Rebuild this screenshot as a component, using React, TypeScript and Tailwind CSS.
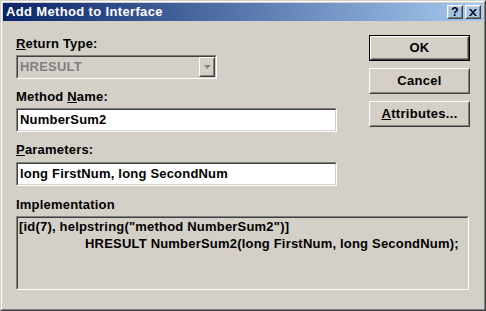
import React from "react";

const F = { fontFamily: '"Liberation Sans", Arial, sans-serif' };

function Sunken({ className = "", inner = "", children }: { className?: string; inner?: string; children?: React.ReactNode }) {
  return (
    <div className={`border border-t-[#808080] border-l-[#808080] border-b-white border-r-white ${className}`}>
      <div className={`h-full border border-t-[#404040] border-l-[#404040] border-b-[#d4d0c8] border-r-[#d4d0c8] ${inner}`}>{children}</div>
    </div>
  );
}

function Raised({ className = "", inner = "", children }: { className?: string; inner?: string; children?: React.ReactNode }) {
  return (
    <div className={`border border-t-white border-l-white border-b-[#404040] border-r-[#404040] ${className}`}>
      <div className={`h-full border border-t-[#d4d0c8] border-l-[#d4d0c8] border-b-[#808080] border-r-[#808080] ${inner}`}>{children}</div>
    </div>
  );
}

function Label({ children, className = "" }: { children: React.ReactNode; className?: string }) {
  return <div className={`h-[16px] leading-[16px] text-[13px] font-bold text-black tracking-[0.2px] ${className}`}>{children}</div>;
}

const btnText = "flex items-center justify-center text-[13px] font-bold text-black tracking-[0.3px]";

export default function App() {
  return (
    <div style={F} className="w-[486px] h-[311px] bg-[#d4d0c8]">
      <div className="w-full h-full border border-t-[#d4d0c8] border-l-[#d4d0c8] border-b-[#404040] border-r-[#404040]">
        <div className="w-full h-full border border-t-white border-l-white border-b-[#808080] border-r-[#808080] p-px flex flex-col">
          {/* Title bar */}
          <div className="h-[18px] flex items-center bg-[linear-gradient(to_right,#0a246a,#a6caf0)] pl-[3px] pr-[2px]">
            <div className="flex-1 text-white font-bold text-[13px] leading-[18px] tracking-[0.35px]">Add Method to Interface</div>
            <Raised className="w-[16px] h-[14px]" inner="flex items-center justify-center text-[12px] font-bold leading-none text-black">?</Raised>
            <Raised className="w-[16px] h-[14px] ml-[2px]" inner="flex items-center justify-center">
              <svg width="8" height="7" viewBox="0 0 8 7">
                <path d="M0 0h2l2 2.5L6 0h2L5 3.5 8 7H6L4 4.5 2 7H0l3-3.5z" fill="#000" />
              </svg>
            </Raised>
          </div>
          {/* Body */}
          <div className="flex-1 flex flex-col px-[13px] pt-[14px]">
            <div className="flex justify-between">
              <div className="flex flex-col pt-px">
                <Label><span className="underline">R</span>eturn Type:</Label>
                <Sunken className="mt-[3px] w-[201px] h-[24px]" inner="flex items-stretch">
                  <div className="flex-1 pl-[2px] text-[13px] font-bold text-[#808080] leading-[20px] tracking-[0.2px]">HRESULT</div>
                  <Raised className="w-[16px]" inner="flex items-center justify-center">
                    <svg width="7" height="5" viewBox="0 0 7 5">
                      <path d="M1 1h6L4 4z" fill="#fff" />
                      <path d="M0 0h7L3.5 4z" fill="#808080" />
                    </svg>
                  </Raised>
                </Sunken>
                <Label className="mt-[10px]">Method <span className="underline">N</span>ame:</Label>
                <Sunken className="mt-[3px] w-[321px] h-[24px]" inner="bg-white pl-[2px] text-[13px] font-bold leading-[20px] tracking-[0.2px] text-black">NumberSum2</Sunken>
                <Label className="mt-[10px]"><span className="underline">P</span>arameters:</Label>
                <Sunken className="mt-[4px] w-[321px] h-[24px]" inner="bg-white pl-[2px] text-[13px] font-bold leading-[20px] tracking-[0.2px] text-black">long FirstNum, long SecondNum</Sunken>
              </div>
              <div className="flex flex-col w-[101px] gap-[7px]">
                <div className="h-[26px] border border-black">
                  <Raised className="h-full" inner={btnText}>OK</Raised>
                </div>
                <Raised className="h-[26px]" inner={btnText}>Cancel</Raised>
                <Raised className="h-[26px]" inner={btnText}><span><span className="underline">A</span>ttributes...</span></Raised>
              </div>
            </div>
            <Label className="mt-[11px]">Implementation</Label>
            <Sunken className="mt-[3px] w-[453px] h-[74px]" inner="text-[13px] font-bold leading-[17px] tracking-[0.2px] text-black pl-px">
              <div>[id(7), helpstring("method NumberSum2")]</div>
              <div className="pl-[66px]">HRESULT NumberSum2(long FirstNum, long SecondNum);</div>
            </Sunken>
          </div>
        </div>
      </div>
    </div>
  );
}
